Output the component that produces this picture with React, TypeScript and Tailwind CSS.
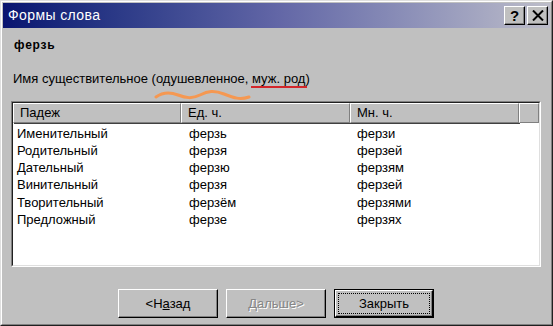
const rows = [
  ["Именительный", "ферзь", "ферзи"],
  ["Родительный", "ферзя", "ферзей"],
  ["Дательный", "ферзю", "ферзям"],
  ["Винительный", "ферзя", "ферзей"],
  ["Творительный", "ферзём", "ферзями"],
  ["Предложный", "ферзе", "ферзях"],
];

function TitleButton({ children }: { children: React.ReactNode }) {
  return (
    <div className="w-[21px] h-[19px] flex items-center justify-center bg-[#c0c0c0] border border-t-white border-l-white border-r-black border-b-black shadow-[inset_-1px_-1px_0_#808080]">
      {children}
    </div>
  );
}

function HeaderCell({ label, w }: { label: string; w: string }) {
  return (
    <div
      className={`${w} h-full flex items-center pl-[6px] border border-t-white border-l-white border-r-[#808080] border-b-[#808080] shadow-[1px_1px_0_#404040] text-[13px]`}
    >
      {label}
    </div>
  );
}

export default function App() {
  return (
    <div className="w-[553px] h-[326px] overflow-hidden bg-[#c0c0c0] font-['Liberation_Sans',Arial,sans-serif] text-black border border-t-[#dfdfdf] border-l-[#dfdfdf] border-r-[#202020] border-b-[#202020]">
      <div className="h-full border border-t-white border-l-white border-r-[#808080] border-b-[#808080] p-px flex flex-col">
        {/* title bar */}
        <div className="h-[25px] shrink-0 flex items-center justify-between pl-[5px] pr-[2px] bg-linear-to-r from-[#0a1470] via-[#6266a6] to-[#bdbdc9]">
          <span className="text-white text-[14px] tracking-[0.4px]">Формы слова</span>
          <div className="flex gap-[2px]">
            <TitleButton>
              <span className="font-bold text-[15px] leading-none">?</span>
            </TitleButton>
            <TitleButton>
              <svg width="12" height="11" viewBox="0 0 12 11">
                <path d="M1 0.5 L11 10.5 M11 0.5 L1 10.5" stroke="black" strokeWidth="2" />
              </svg>
            </TitleButton>
          </div>
        </div>

        <div className="pl-[8px] pr-[9px] flex flex-col">
          <div className="mt-[9px] h-[16px] flex items-center pl-[3px] font-bold text-[12px] tracking-[0.8px]">ферзь</div>

          <div className="relative mt-[18px] h-[16px] flex items-center pl-[2px] text-[13px]">
            Имя существительное (одушевленное, муж. род)
            <svg className="absolute left-[143px] top-[18px]" width="98" height="12" viewBox="0 0 98 12">
              <path
                d="M2 8 C 9 3, 16 3, 24 6 S 38 10, 46 6 S 60 1, 70 5 S 86 11, 95 8"
                fill="none"
                stroke="#f59852"
                strokeWidth="3"
                strokeLinecap="round"
              />
            </svg>
            <div className="absolute left-[240px] top-[15px] w-[56px] h-[2px] bg-[#d3262a]" />
          </div>

          {/* list view */}
          <div className="mt-[14px] h-[166px] bg-white border border-t-[#808080] border-l-[#808080] border-r-white border-b-white">
            <div className="h-full border border-t-[#202020] border-l-[#202020] border-r-[#dfdfdf] border-b-[#dfdfdf] flex flex-col">
              <div className="h-[20px] shrink-0 flex bg-[#c0c0c0]">
                <HeaderCell label="Падеж" w="w-[168px]" />
                <HeaderCell label="Ед. ч." w="w-[169px]" />
                <HeaderCell label="Мн. ч." w="w-[169px]" />
                <div className="flex-1 h-full border border-t-white border-l-white border-r-[#808080] border-b-[#808080]" />
              </div>
              <div className="pt-[2px] text-[13px]">
                {rows.map((r) => (
                  <div key={r[0]} className="h-[17.2px] flex items-center">
                    <span className="w-[168px] pl-[4px]">{r[0]}</span>
                    <span className="w-[169px] pl-[8px]">{r[1]}</span>
                    <span className="w-[169px] pl-[7px]">{r[2]}</span>
                  </div>
                ))}
              </div>
            </div>
          </div>

          {/* buttons */}
          <div className="mt-[22px] flex justify-center gap-[8px] text-[13px]">
            <div className="w-[100px] h-[29px] flex items-center justify-center border border-t-white border-l-white border-r-black border-b-black shadow-[inset_-1px_-1px_0_#808080]">
              <span>
                &lt;Н<span className="underline">а</span>зад
              </span>
            </div>
            <div className="w-[100px] h-[29px] flex items-center justify-center border border-t-white border-l-white border-r-black border-b-black shadow-[inset_-1px_-1px_0_#808080]">
              <span className="text-[#868686] [text-shadow:1px_1px_0_#ffffff]">
                <span className="underline">Д</span>альше&gt;
              </span>
            </div>
            <div className="w-[100px] h-[29px] border border-black">
              <div className="h-full border border-t-white border-l-white border-r-black border-b-black shadow-[inset_-1px_-1px_0_#808080] p-[2px]">
                <div className="h-full flex items-center justify-center border border-dotted border-black">
                  Закрыть
                </div>
              </div>
            </div>
          </div>
        </div>
      </div>
    </div>
  );
}
